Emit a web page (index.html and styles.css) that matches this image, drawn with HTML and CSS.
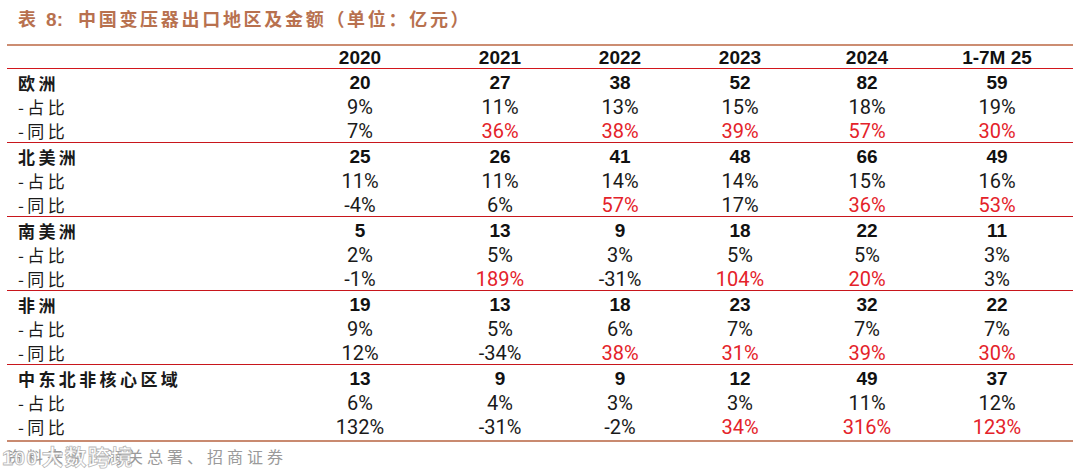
FILE: index.html
```html
<!DOCTYPE html>
<html lang="zh">
<head>
<meta charset="utf-8">
<link rel="stylesheet" href="styles.css">
</head>
<body>
<div class="title"><span class="t-lead">表 <span class="num">8:</span></span><span class="t-main">中国变压器出口地区及金额（单位：亿元）</span></div>
<div class="table">
  <div class="row head">
    <div class="lab"></div><div class="c">2020</div><div class="c">2021</div><div class="c">2022</div><div class="c">2023</div><div class="c">2024</div><div class="c">1-7M 25</div>
  </div>
  <div class="group">
    <div class="row main"><div class="lab">欧洲</div><div class="c">20</div><div class="c">27</div><div class="c">38</div><div class="c">52</div><div class="c">82</div><div class="c">59</div></div>
    <div class="row"><div class="lab">-占比</div><div class="c">9%</div><div class="c">11%</div><div class="c">13%</div><div class="c">15%</div><div class="c">18%</div><div class="c">19%</div></div>
    <div class="row"><div class="lab">-同比</div><div class="c">7%</div><div class="c red">36%</div><div class="c red">38%</div><div class="c red">39%</div><div class="c red">57%</div><div class="c red">30%</div></div>
  </div>
  <div class="group">
    <div class="row main"><div class="lab">北美洲</div><div class="c">25</div><div class="c">26</div><div class="c">41</div><div class="c">48</div><div class="c">66</div><div class="c">49</div></div>
    <div class="row"><div class="lab">-占比</div><div class="c">11%</div><div class="c">11%</div><div class="c">14%</div><div class="c">14%</div><div class="c">15%</div><div class="c">16%</div></div>
    <div class="row"><div class="lab">-同比</div><div class="c">-4%</div><div class="c">6%</div><div class="c red">57%</div><div class="c">17%</div><div class="c red">36%</div><div class="c red">53%</div></div>
  </div>
  <div class="group">
    <div class="row main"><div class="lab">南美洲</div><div class="c">5</div><div class="c">13</div><div class="c">9</div><div class="c">18</div><div class="c">22</div><div class="c">11</div></div>
    <div class="row"><div class="lab">-占比</div><div class="c">2%</div><div class="c">5%</div><div class="c">3%</div><div class="c">5%</div><div class="c">5%</div><div class="c">3%</div></div>
    <div class="row"><div class="lab">-同比</div><div class="c">-1%</div><div class="c red">189%</div><div class="c">-31%</div><div class="c red">104%</div><div class="c red">20%</div><div class="c">3%</div></div>
  </div>
  <div class="group">
    <div class="row main"><div class="lab">非洲</div><div class="c">19</div><div class="c">13</div><div class="c">18</div><div class="c">23</div><div class="c">32</div><div class="c">22</div></div>
    <div class="row"><div class="lab">-占比</div><div class="c">9%</div><div class="c">5%</div><div class="c">6%</div><div class="c">7%</div><div class="c">7%</div><div class="c">7%</div></div>
    <div class="row"><div class="lab">-同比</div><div class="c">12%</div><div class="c">-34%</div><div class="c red">38%</div><div class="c red">31%</div><div class="c red">39%</div><div class="c red">30%</div></div>
  </div>
  <div class="group last">
    <div class="row main"><div class="lab">中东北非核心区域</div><div class="c">13</div><div class="c">9</div><div class="c">9</div><div class="c">12</div><div class="c">49</div><div class="c">37</div></div>
    <div class="row"><div class="lab">-占比</div><div class="c">6%</div><div class="c">4%</div><div class="c">3%</div><div class="c">3%</div><div class="c">11%</div><div class="c">12%</div></div>
    <div class="row"><div class="lab">-同比</div><div class="c">132%</div><div class="c">-31%</div><div class="c">-2%</div><div class="c red">34%</div><div class="c red">316%</div><div class="c red">123%</div></div>
  </div>
</div>
<div class="source">
  <span class="src-text">资料来源：海关总署、招商证券</span>
  <span class="wm"><span class="wm-num">100</span>大数跨境</span>
</div>
</body>
</html>
```

FILE: styles.css
```css
html, body {
  margin: 0;
  padding: 0;
  background: #ffffff;
}
body {
  width: 1080px;
  height: 473px;
  overflow: hidden;
  font-family: "Noto Sans CJK SC", "Noto Sans", sans-serif;
  color: #1a1a1a;
}
.title {
  height: 36px;
  line-height: 36px;
  margin-bottom: 8px;
  padding-left: 18px;
  color: #b8714f;
  font-size: 18px;
  font-weight: 700;
  letter-spacing: 2.7px;
  white-space: nowrap;
  display: flex;
}
.t-lead {
  width: 60px;
  letter-spacing: 0;
  word-spacing: 6px;
}
.t-lead .num {
  font-family: "Liberation Sans", Arial, sans-serif;
  font-size: 19px;
}
.table {
  margin: 0 7px;
  width: 1066px;
  border-top: 2px solid #cc8d72;
}
.row {
  display: grid;
  grid-template-columns: 283px 140px 140px 100px 140px 114px 146px;
  height: 24px;
  align-items: center;
}
.head {
  height: 22px;
  border-bottom: 1px solid #d2161c;
}
.head .c {
  font-family: "Liberation Sans", Arial, sans-serif;
  font-weight: 700;
  font-size: 19px;
  color: #111;
}
.group {
  padding-top: 1px;
  border-bottom: 1px solid #c8161c;
}
.group.last {
  padding-bottom: 2px;
  border-bottom: 2px solid #c98a70;
}
.lab {
  padding-left: 11px;
  font-size: 17px;
  letter-spacing: 3.4px;
  white-space: nowrap;
  color: #1a1a1a;
}
.main .lab {
  font-weight: 700;
}
.c {
  text-align: center;
  font-family: Roboto, "Liberation Sans", sans-serif;
  font-size: 20px;
  color: #1a1a1a;
  line-height: 24px;
}
.main .c {
  font-family: "Liberation Sans", Arial, sans-serif;
  font-weight: 700;
  font-size: 19px;
  color: #111;
}
.c.red {
  color: #e4222a;
}
.source {
  position: relative;
  height: 26px;
  line-height: 26px;
  margin-top: 1px;
  padding-left: 7px;
  font-size: 16px;
  letter-spacing: 4px;
  color: #9a9a9a;
  white-space: nowrap;
}
.wm {
  position: absolute;
  left: 2px;
  top: -1px;
  font-size: 22px;
  font-weight: 700;
  letter-spacing: 1px;
  color: rgba(255, 255, 255, 0.9);
  -webkit-text-stroke: 0.8px rgba(160, 160, 160, 0.75);
}
.wm-num {
  font-family: "Liberation Sans", Arial, sans-serif;
  font-size: 20px;
  margin-right: 3px;
}
```
